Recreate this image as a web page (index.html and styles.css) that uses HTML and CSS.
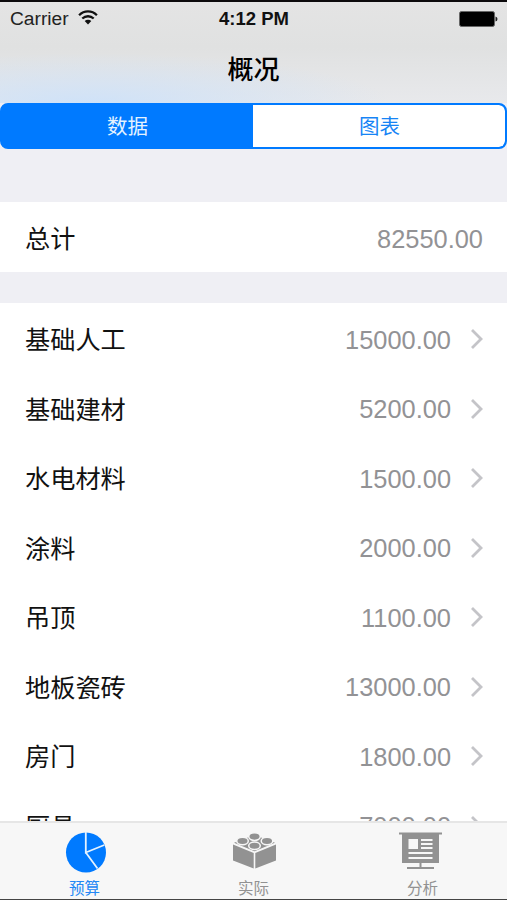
FILE: index.html
```html
<!DOCTYPE html>
<html lang="zh-CN">
<head>
<meta charset="utf-8">
<title>概况</title>
<link rel="stylesheet" href="styles.css">
</head>
<body>
<div class="screen">
  <header class="header">
    <div class="status">
      <div class="carrier"><span>Carrier</span>
        <svg class="wifi" width="20" height="15" viewBox="0 0 20 15" fill="none" stroke="#111" stroke-width="2.3"><path d="M1.1 5.2C6.2.2 13.8.2 18.9 5.2"/><path d="M4.3 8.5c3.3-3 8.1-3 11.4 0"/><path d="M10 14.4 6.7 11.1c1.9-1.7 4.7-1.7 6.600 0z" fill="#111" stroke="none"/></svg>
      </div>
      <div class="time">4:12 PM</div>
      <svg class="battery" width="39" height="16" viewBox="0 0 39 16"><rect x=".5" y=".5" width="35" height="15" rx="2" fill="#000" stroke="#666"/><path d="M36.5 5.5q2 .5 2 2.5t-2 2.5z" fill="#222"/></svg>
    </div>
    <h1 class="title">概况</h1>
  </header>
  <div class="segments"><div class="segment active">数据</div><div class="segment">图表</div></div>
  <main class="content">
    <section class="group total"><div class="row"><span>总计</span><span class="value">82550.00</span></div></section>
    <section class="group">
      <div class="row"><span>基础人工</span><span class="value">15000.00</span><svg class="chevron" viewBox="0 0 14 20"><path d="m2 1 9 9-9 9"/></svg></div>
      <div class="row"><span>基础建材</span><span class="value">5200.00</span><svg class="chevron" viewBox="0 0 14 20"><path d="m2 1 9 9-9 9"/></svg></div>
      <div class="row"><span>水电材料</span><span class="value">1500.00</span><svg class="chevron" viewBox="0 0 14 20"><path d="m2 1 9 9-9 9"/></svg></div>
      <div class="row"><span>涂料</span><span class="value">2000.00</span><svg class="chevron" viewBox="0 0 14 20"><path d="m2 1 9 9-9 9"/></svg></div>
      <div class="row"><span>吊顶</span><span class="value">1100.00</span><svg class="chevron" viewBox="0 0 14 20"><path d="m2 1 9 9-9 9"/></svg></div>
      <div class="row"><span>地板瓷砖</span><span class="value">13000.00</span><svg class="chevron" viewBox="0 0 14 20"><path d="m2 1 9 9-9 9"/></svg></div>
      <div class="row"><span>房门</span><span class="value">1800.00</span><svg class="chevron" viewBox="0 0 14 20"><path d="m2 1 9 9-9 9"/></svg></div>
      <div class="row"><span>厨具</span><span class="value">7000.00</span><svg class="chevron" viewBox="0 0 14 20"><path d="m2 1 9 9-9 9"/></svg></div>
    </section>
  </main>
  <nav class="tabs">
    <div class="tab active">
      <svg width="44" height="44" viewBox="0 0 44 44"><circle cx="23" cy="22.500" r="20" fill="#007aff"/><path d="M22.800 2v20.500l18.500-7.500M22.800 22.500 34.500 38.500" fill="none" stroke="#e4f2ff" stroke-width="1.800"/></svg>
      <span>预算</span>
    </div>
    <div class="tab">
      <svg width="44" height="44" viewBox="0 0 44 44"><g fill="#929292"><path d="M1 14.500 21.700 23v15.500L1 30.500zM44 14.500 23.300 23v15.500l20.700-8zM2 12.800 22.500 5 43 12.800 22.500 21.300z"/></g><g fill="#929292" stroke="#f7f7f7" stroke-width="1.500"><ellipse cx="22.500" cy="6.600" rx="5.800" ry="3.800"/><ellipse cx="10.500" cy="11" rx="5.800" ry="3.800"/><ellipse cx="35" cy="11" rx="5.800" ry="3.800"/><ellipse cx="22.500" cy="15.800" rx="5.800" ry="3.800"/></g></svg>
      <span>实际</span>
    </div>
    <div class="tab">
      <svg class="board" width="44" height="44" viewBox="0 0 44 44"><path d="M0 2.500h43v2h-3V33H22.500v4H35v2H8v-2h12.500v-4H3V4.500H0z" fill="#929292"/><path d="M9.500 9H19v10H9.500zM22 9h11.500v2H22zM22 13h11.500v2H22zM22 17h11.500v2H22zM9.500 22h24v2h-24zM9.500 27h24v2h-24z" fill="#f7f7f7"/></svg>
      <span>分析</span>
    </div>
  </nav>
</div>
</body>
</html>
```
FILE: styles.css
```css
* { box-sizing: border-box; }
body {
  margin: 0;
  font-family: "Liberation Sans", "Noto Sans CJK SC", sans-serif;
}
.screen {
  height: 900px;
  display: flex;
  flex-direction: column;
  overflow: hidden;
  background: #efeff4;
  border-top: 2px solid #0c0a0c;
  border-bottom: 1px solid #444;
}
.header {
  flex: 0 0 101px;
  background:
    radial-gradient(ellipse 300px 50px at 90px 100%, #cfe2f8 0%, #cfe2f800 100%),
    linear-gradient(#e4e4e4, #e0e1e1 45%, #e8e9ec);
}
.status {
  height: 33px;
  display: grid;
  grid-template-columns: 1fr auto 1fr;
  align-items: center;
  padding: 0 9px 0 10px;
  font-size: 19.200px;
  color: #222;
}
.carrier { display: flex; align-items: center; gap: 9px; }
.wifi { margin-bottom: 3px; }
.time { font-weight: bold; font-size: 18.500px; color: #111; }
.battery { justify-self: end; }
.title {
  margin: 0;
  height: 68px;
  line-height: 71px;
  text-align: center;
  font-size: 26px;
  font-weight: 500;
  color: #000;
}
.segments {
  flex: 0 0 46px;
  display: flex;
  border: 2px solid #007aff;
  border-radius: 8px;
  background: #007aff;
  overflow: hidden;
}
.segment {
  flex: 1;
  line-height: 43px;
  text-align: center;
  font-size: 20.500px;
  color: #1684f5;
  background: #fff;
  border-radius: 0 6px 6px 0;
  padding-left: 1px;
}
.segment.active { background: #007aff; color: #e4f2ff; padding: 0; }
.content { flex: 1; min-height: 0; overflow: hidden; padding-top: 53px; }
.group { background: #fff; padding-top: 0.500px; }
.total { margin-bottom: 31px; padding-top: 0; }
.row {
  height: 69.500px;
  display: flex;
  align-items: center;
  padding: 0 23px 0 25px;
  font-size: 25.200px;
  color: #111;
}
.total .row { height: 70px; padding-right: 24px; }
.value {
  margin-left: auto;
  padding-top: 4px;
  font-size: 25.400px;
  color: #929295;
}
.chevron {
  width: 14px;
  height: 20px;
  margin: 2px 0 0 19px;
  fill: none;
  stroke: #c4c4c8;
  stroke-width: 2.800;
}
.tabs {
  flex: 0 0 78px;
  height: 78px;
  min-height: 0;
  display: flex;
  background: #f7f7f7;
  border-top: 2px solid #e6e6e6;
}
.tab {
  flex: 1;
  display: flex;
  flex-direction: column;
  align-items: center;
  padding-top: 7px;
  font-size: 15.500px;
  line-height: 25px;
  color: #929292;
}
.tab svg { display: block; flex: none; }
.tab span { height: 25px; padding-top: 2px; }
.tab .board { margin-right: 3px; }
.tab.active { color: #2388f5; }
```
